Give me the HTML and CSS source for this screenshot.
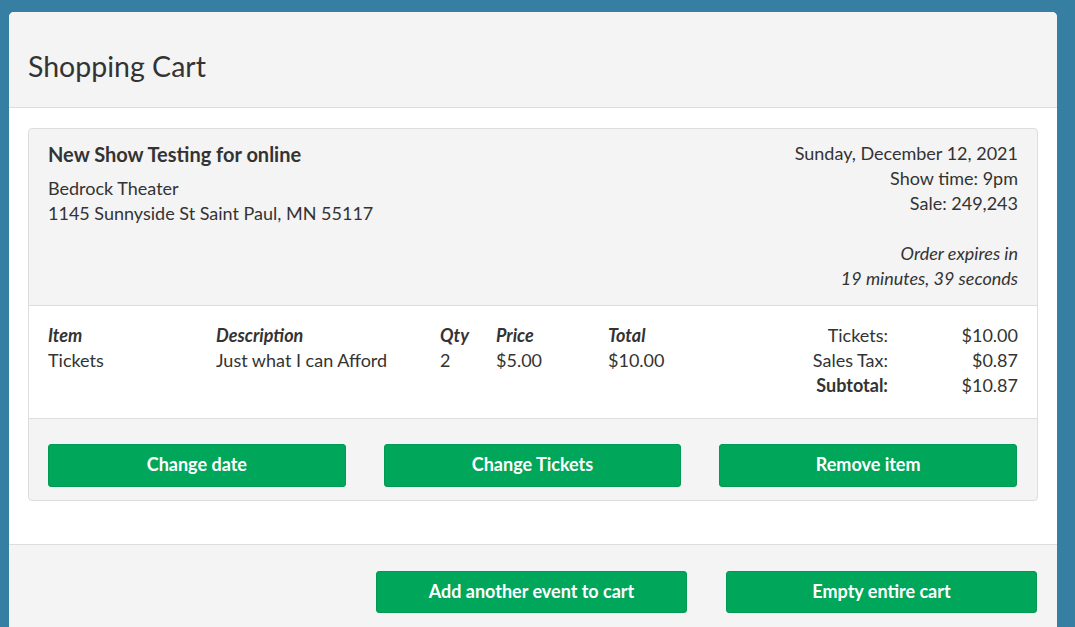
FILE: index.html
```html
<!DOCTYPE html>
<html>
<head>
<meta charset="utf-8">
<link rel="stylesheet" href="styles.css">
</head>
<body>
<div class="card">
  <div class="card-header"><h1 class="title">Shopping Cart</h1></div>
  <div class="card-body">
    <div class="panel">
      <div class="panel-head">
        <div class="event">
          <div class="event-name">New Show Testing for online</div>
          <div>Bedrock Theater</div>
          <div>1145 Sunnyside St Saint Paul, MN 55117</div>
        </div>
        <div class="when">
          <div>Sunday, December 12, 2021</div>
          <div>Show time: 9pm</div>
          <div>Sale: 249,243</div>
          <div class="expires">Order expires in<br>19 minutes, 39 seconds</div>
        </div>
      </div>
      <div class="panel-body">
        <div class="items">
          <div class="th">Item</div>
          <div class="th">Description</div>
          <div class="th">Qty</div>
          <div class="th">Price</div>
          <div class="th">Total</div>
          <div>Tickets</div>
          <div>Just what I can Afford</div>
          <div>2</div>
          <div>$5.00</div>
          <div>$10.00</div>
        </div>
        <div class="summary">
          <div>Tickets:</div><div>$10.00</div>
          <div>Sales Tax:</div><div>$0.87</div>
          <div class="strong">Subtotal:</div><div>$10.87</div>
        </div>
      </div>
      <div class="panel-foot">
        <button class="btn">Change date</button>
        <button class="btn">Change Tickets</button>
        <button class="btn">Remove item</button>
      </div>
    </div>
  </div>
  <div class="card-footer">
    <button class="btn btn-wide">Add another event to cart</button>
    <button class="btn btn-wide">Empty entire cart</button>
  </div>
</div>
</body>
</html>
```
FILE: styles.css
```css
* { box-sizing: border-box; }
html, body { height: 100%; }
body {
  margin: 0;
  padding: 12px 18px 0 9px;
  background: #367fa3;
  font-family: Lato, "Open Sans", sans-serif;
  font-size: 18px;
  line-height: 25px;
  color: #333;
  overflow: hidden;
}
.card {
  background: #fff;
  border-radius: 5px 5px 0 0;
  height: 100%;
  display: flex;
  flex-direction: column;
}
.card-header {
  background: #f4f4f4;
  border-bottom: 1px solid #ddd;
  border-radius: 5px 5px 0 0;
  padding: 37px 19px 24px;
}
.title {
  margin: 0;
  font-size: 28.5px;
  line-height: 34px;
  font-weight: 400;
}
.card-body {
  padding: 20px 19px 43px;
}
.panel {
  border: 1px solid #ddd;
  border-radius: 4px;
  background: #f4f4f4;
}
.panel-head {
  display: flex;
  justify-content: space-between;
  padding: 12px 19px 14px;
  border-bottom: 1px solid #ddd;
}
.event-name {
  font-size: 20px;
  font-weight: 700;
  line-height: 26px;
  margin-bottom: 9px;
}
.when { text-align: right; }
.expires {
  font-style: italic;
  margin-top: 25px;
}
.panel-body {
  background: #fff;
  display: flex;
  justify-content: space-between;
  padding: 17px 19px 19px;
  border-bottom: 1px solid #ddd;
  min-height: 113px;
}
.items {
  display: grid;
  grid-template-columns: 168px 224px 56px 112px auto;
  align-content: start;
}
.th {
  font-weight: 700;
  font-style: italic;
}
.summary {
  display: grid;
  grid-template-columns: auto 130px;
  text-align: right;
  align-content: start;
}
.strong { font-weight: 700; }
.panel-foot {
  display: grid;
  grid-template-columns: 1fr 1fr 1fr;
  column-gap: 38px;
  padding: 25px 20px 13px 19px;
}
.btn {
  display: block;
  height: 43px;
  padding: 0 6px 3px;
  border: 1px solid #009a53;
  border-radius: 3px;
  background: #00a65a;
  color: #fff;
  font-family: inherit;
  font-size: 18px;
  font-weight: 700;
  cursor: pointer;
}
.card-footer {
  flex: 1;
  background: #f4f4f4;
  border-top: 1px solid #ddd;
  display: flex;
  justify-content: flex-end;
  align-items: flex-start;
  gap: 39px;
  padding: 26px 20px 0;
}
.btn-wide {
  width: 311px;
  height: 42px;
}
```
